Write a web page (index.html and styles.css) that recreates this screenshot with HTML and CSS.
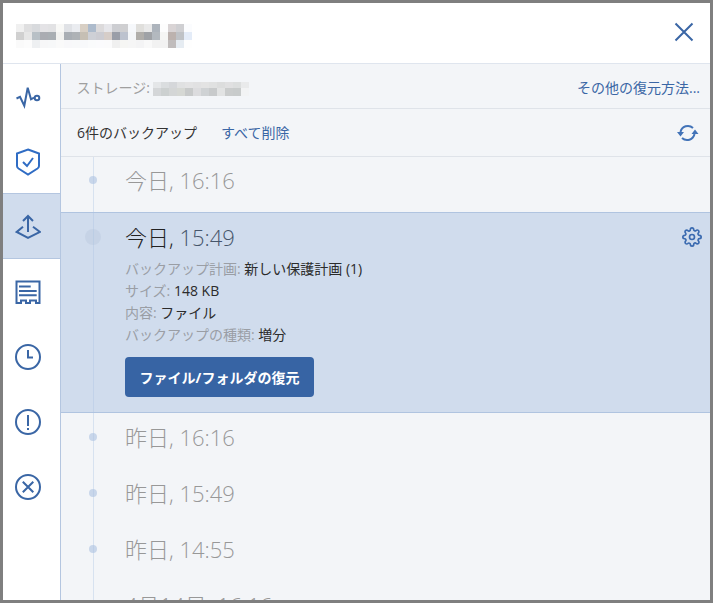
FILE: index.html
```html
<!DOCTYPE html>
<html lang="ja">
<head>
<meta charset="utf-8">
<title>バックアップ</title>
<link rel="stylesheet" href="styles.css">
</head>
<body>
<div class="window">
  <header class="top">
    <svg class="mosaic" width="176" height="24" viewBox="0 0 176 24" shape-rendering="crispEdges">
      <g>
        <rect x="0" y="0" width="8" height="8" fill="#f0f0f0"/><rect x="8" y="0" width="8" height="8" fill="#dfdfe0"/><rect x="16" y="0" width="8" height="8" fill="#d8dadd"/><rect x="24" y="0" width="8" height="8" fill="#e4e3e6"/><rect x="32" y="0" width="8" height="8" fill="#e2e2e4"/><rect x="40" y="0" width="8" height="8" fill="#f8f8f6"/><rect x="48" y="0" width="8" height="8" fill="#e0e2e6"/><rect x="56" y="0" width="8" height="8" fill="#eaecf0"/><rect x="64" y="0" width="8" height="8" fill="#d8cfc4"/><rect x="72" y="0" width="8" height="8" fill="#adbbcc"/><rect x="80" y="0" width="8" height="8" fill="#dcdadb"/><rect x="88" y="0" width="8" height="8" fill="#e6e6ea"/><rect x="96" y="0" width="8" height="8" fill="#cdced2"/><rect x="104" y="0" width="8" height="8" fill="#cfcfd1"/><rect x="112" y="0" width="8" height="8" fill="#f6f8fb"/><rect x="120" y="0" width="8" height="8" fill="#e0dfdc"/><rect x="128" y="0" width="8" height="8" fill="#e9e9e9"/><rect x="136" y="0" width="8" height="8" fill="#adb4bc"/><rect x="144" y="0" width="8" height="8" fill="#fdfdfd"/><rect x="152" y="0" width="8" height="8" fill="#d9d4d5"/><rect x="160" y="0" width="8" height="8" fill="#cfcfd2"/><rect x="168" y="0" width="8" height="8" fill="#fbfcfe"/>
      </g>
      <g>
        <rect x="0" y="8" width="8" height="8" fill="#d0d0d0"/><rect x="8" y="8" width="8" height="8" fill="#e6e6e6"/><rect x="16" y="8" width="8" height="8" fill="#b8c0c6"/><rect x="24" y="8" width="8" height="8" fill="#aaacb2"/><rect x="32" y="8" width="8" height="8" fill="#a9aeb3"/><rect x="40" y="8" width="8" height="8" fill="#f2f2f0"/><rect x="48" y="8" width="8" height="8" fill="#a9aeb4"/><rect x="56" y="8" width="8" height="8" fill="#aeb2b6"/><rect x="64" y="8" width="8" height="8" fill="#c6bfb4"/><rect x="72" y="8" width="8" height="8" fill="#ced0d6"/><rect x="80" y="8" width="8" height="8" fill="#ccccd2"/><rect x="88" y="8" width="8" height="8" fill="#d6cdc8"/><rect x="96" y="8" width="8" height="8" fill="#9a9ea8"/><rect x="104" y="8" width="8" height="8" fill="#bcc2ce"/><rect x="112" y="8" width="8" height="8" fill="#f4f6f8"/><rect x="120" y="8" width="8" height="8" fill="#b0aeaa"/><rect x="128" y="8" width="8" height="8" fill="#9fa2a6"/><rect x="136" y="8" width="8" height="8" fill="#b3b9bf"/><rect x="144" y="8" width="8" height="8" fill="#f6f6f4"/><rect x="152" y="8" width="8" height="8" fill="#bcb2ae"/><rect x="160" y="8" width="8" height="8" fill="#bfc2c6"/><rect x="168" y="8" width="8" height="8" fill="#e4ecf8"/>
      </g>
      <g>
        <rect x="0" y="16" width="8" height="8" fill="#fafafa"/><rect x="8" y="16" width="8" height="8" fill="#fcfcfc"/><rect x="16" y="16" width="8" height="8" fill="#eef0f2"/><rect x="24" y="16" width="8" height="8" fill="#f7f7f8"/><rect x="32" y="16" width="8" height="8" fill="#f7f8f9"/><rect x="40" y="16" width="8" height="8" fill="#fafafa"/><rect x="48" y="16" width="8" height="8" fill="#f8f8fa"/><rect x="56" y="16" width="8" height="8" fill="#f8f9fa"/><rect x="64" y="16" width="8" height="8" fill="#f8f9fb"/><rect x="72" y="16" width="8" height="8" fill="#fafbfc"/><rect x="80" y="16" width="8" height="8" fill="#fbfbfd"/><rect x="88" y="16" width="8" height="8" fill="#fbfbfc"/><rect x="96" y="16" width="8" height="8" fill="#f0f0f0"/><rect x="104" y="16" width="8" height="8" fill="#f6f6f4"/><rect x="112" y="16" width="8" height="8" fill="#f6f6f6"/><rect x="120" y="16" width="8" height="8" fill="#f4f4f5"/><rect x="128" y="16" width="8" height="8" fill="#f9f9f9"/><rect x="136" y="16" width="8" height="8" fill="#f2f2f2"/><rect x="144" y="16" width="8" height="8" fill="#f2f2f2"/><rect x="152" y="16" width="8" height="8" fill="#c0bcbc"/><rect x="160" y="16" width="8" height="8" fill="#e6ecf2"/><rect x="168" y="16" width="8" height="8" fill="#fefefe"/>
      </g>
    </svg>
    <svg class="close" width="24" height="24" viewBox="0 0 24 24" fill="none" stroke="currentColor" stroke-width="2"><path d="M3.500 3.500l17 17M20.500 3.500l-17 17"/></svg>
  </header>
  <div class="body">
    <nav class="side">
      <div class="nav-item">
        <svg width="26" height="26" viewBox="0 0 26 26" fill="none" stroke="currentColor" stroke-width="2"><path d="M1.500 14.500L5 12.800l4.300 9L12.700 3.800 16 15.300l3-1.600"/><circle cx="22" cy="14" r="2.300"/></svg>
      </div>
      <div class="nav-item shield">
        <svg width="26" height="28" viewBox="0 0 26 28" fill="none" stroke="currentColor" stroke-width="2"><path d="M13 1.500L24 5.500V18q0 1.500-1.500 2.500L13 26.500 3.500 20.500Q2 19.500 2 18V5.500z"/><path d="M8 14l4 4 6-8"/></svg>
      </div>
      <div class="nav-item active">
        <svg width="26" height="26" viewBox="0 0 26 26" fill="none" stroke="currentColor" stroke-width="2"><path d="M8 12.700L1.700 18 13 24l12-6-7-5.300"/><path d="M13 18V1.500M8 7l5-5 5 5"/></svg>
      </div>
      <div class="nav-item">
        <svg width="26" height="26" viewBox="0 0 26 26" fill="none" stroke="currentColor" stroke-width="2"><path d="M1.500 24V2.500h23V24h-3.500v-2.500h-6V24h-4v-2.500h-5V24z"/><path d="M4 7.500h11.700M4 12h17.700M4 16.300h17.700"/></svg>
      </div>
      <div class="nav-item">
        <svg width="26" height="26" viewBox="0 0 26 26" fill="none" stroke="currentColor" stroke-width="2"><circle cx="13" cy="13" r="12"/><path d="M13 6v7.500h5"/></svg>
      </div>
      <div class="nav-item">
        <svg width="26" height="26" viewBox="0 0 26 26" fill="none" stroke="currentColor" stroke-width="2"><circle cx="13" cy="13" r="12"/><path d="M13 6v11M13 19v2"/></svg>
      </div>
      <div class="nav-item">
        <svg width="26" height="26" viewBox="0 0 26 26" fill="none" stroke="currentColor" stroke-width="2"><circle cx="13" cy="13" r="12"/><path d="M7.800 7.800l10.500 10.500M18.300 7.800L7.800 18.300"/></svg>
      </div>
    </nav>
    <main class="main">
      <div class="bar storage">
        <span class="muted">ストレージ:</span>
        <svg class="mosaic-small" width="96" height="16" viewBox="0 0 96 16" shape-rendering="crispEdges">
          <rect x="0" y="2" width="8" height="6" fill="#e4e6e8"/><rect x="8" y="2" width="8" height="6" fill="#dadddf"/><rect x="16" y="2" width="8" height="6" fill="#d5d7da"/><rect x="24" y="2" width="8" height="6" fill="#e0e1e2"/><rect x="32" y="2" width="8" height="6" fill="#e3e3e4"/><rect x="40" y="2" width="8" height="6" fill="#e1e1e2"/><rect x="48" y="2" width="8" height="6" fill="#e3e3e3"/><rect x="56" y="2" width="8" height="6" fill="#e0e1e1"/><rect x="64" y="2" width="8" height="6" fill="#dcdddd"/><rect x="72" y="2" width="8" height="6" fill="#e0e0e1"/><rect x="80" y="2" width="8" height="6" fill="#dcdede"/><rect x="88" y="2" width="8" height="6" fill="#e9eaeb"/>
          <rect x="0" y="8" width="8" height="8" fill="#d4d6d8"/><rect x="8" y="8" width="8" height="8" fill="#ccd0d0"/><rect x="16" y="8" width="8" height="8" fill="#d4d6d6"/><rect x="24" y="8" width="8" height="8" fill="#d6d8d4"/><rect x="32" y="8" width="8" height="8" fill="#c8caca"/><rect x="40" y="8" width="8" height="8" fill="#dcdcde"/><rect x="48" y="8" width="8" height="8" fill="#cfd2d4"/><rect x="56" y="8" width="8" height="8" fill="#c8cacb"/><rect x="64" y="8" width="8" height="8" fill="#e2e3e3"/><rect x="72" y="8" width="8" height="8" fill="#cacccc"/><rect x="80" y="8" width="8" height="8" fill="#c8cbcb"/><rect x="88" y="8" width="8" height="8" fill="#f2f3f4"/>
        </svg>
        <a class="link push">その他の復元方法...</a>
      </div>
      <div class="bar count">
        <span class="dark">6件のバックアップ</span>
        <a class="link delete">すべて削除</a>
        <svg class="refresh push" width="24" height="20" viewBox="0 0 24 20" fill="none" stroke="currentColor" stroke-width="2"><path d="M5.500 9A7.500 7.500 0 0 1 18 5M19.500 11A7.500 7.500 0 0 1 7 15"/><path class="head" d="M2 9h7L5.500 13.500zM16.500 11h7L20 6.500z"/></svg>
      </div>
      <div class="list">
        <div class="row"><div class="marker"><span class="dot"></span></div><div class="date">今日, 16:16</div></div>
        <section class="row selected">
          <div class="marker"><span class="dot big"></span></div>
          <div class="detail">
            <div class="date"><span class="day">今日,</span> <span class="time">15:49</span></div>
            <dl class="facts">
              <div><dt>バックアップ計画:</dt> <dd>新しい保護計画 (1)</dd></div>
              <div><dt>サイズ:</dt> <dd>148 KB</dd></div>
              <div><dt>内容:</dt> <dd>ファイル</dd></div>
              <div><dt>バックアップの種類:</dt> <dd>増分</dd></div>
            </dl>
            <button class="restore">ファイル/フォルダの復元</button>
          </div>
          <svg class="gear" width="20" height="20" viewBox="0 0 24 24" fill="none" stroke="currentColor" stroke-width="2"><circle cx="12" cy="12" r="3"/><path d="M19.400 15a1.650 1.650 0 0 0 .33 1.820l.06.06a2 2 0 0 1 0 2.830 2 2 0 0 1-2.830 0l-.06-.06a1.650 1.650 0 0 0-1.820-.33 1.650 1.650 0 0 0-1 1.510V21a2 2 0 0 1-2 2 2 2 0 0 1-2-2v-.09A1.650 1.650 0 0 0 9 19.400a1.650 1.650 0 0 0-1.820.33l-.06.06a2 2 0 0 1-2.830 0 2 2 0 0 1 0-2.830l.06-.06a1.650 1.650 0 0 0 .33-1.820 1.650 1.650 0 0 0-1.510-1H3a2 2 0 0 1-2-2 2 2 0 0 1 2-2h.09A1.650 1.650 0 0 0 4.600 9a1.650 1.650 0 0 0-.33-1.820l-.06-.06a2 2 0 0 1 0-2.830 2 2 0 0 1 2.830 0l.06.06a1.650 1.650 0 0 0 1.820.33H9a1.650 1.650 0 0 0 1-1.510V3a2 2 0 0 1 2-2 2 2 0 0 1 2 2v.09a1.650 1.650 0 0 0 1 1.510 1.650 1.650 0 0 0 1.820-.33l.06-.06a2 2 0 0 1 2.830 0 2 2 0 0 1 0 2.830l-.06.06a1.650 1.650 0 0 0-.33 1.820V9a1.650 1.650 0 0 0 1.510 1H21a2 2 0 0 1 2 2 2 2 0 0 1-2 2h-.09a1.650 1.650 0 0 0-1.510 1z"/></svg>
        </section>
        <div class="row"><div class="marker"><span class="dot"></span></div><div class="date">昨日, 16:16</div></div>
        <div class="row"><div class="marker"><span class="dot"></span></div><div class="date">昨日, 15:49</div></div>
        <div class="row"><div class="marker"><span class="dot"></span></div><div class="date">昨日, 14:55</div></div>
        <div class="row"><div class="marker"><span class="dot"></span></div><div class="date">4月14日, 16:16</div></div>
        <div class="timeline"></div>
      </div>
    </main>
  </div>
</div>
</body>
</html>
```
FILE: styles.css
```css
* { box-sizing: border-box; }
html, body { margin: 0; height: 100%; overflow: hidden; }
body {
  font-family: "Open Sans", "Noto Sans CJK JP", sans-serif;
  font-size: 14px;
  color: #333;
  background: #fff;
}
.window {
  height: 603px;
  border: 3px solid #7f7f7f;
  display: flex;
  flex-direction: column;
  overflow: hidden;
}
.top {
  flex: none;
  height: 61px;
  display: flex;
  justify-content: space-between;
  align-items: flex-start;
  padding: 21px 14px 0 13px;
  border-bottom: 1px solid #dfe5ee;
  color: #3a66a5;
}
.mosaic, .mosaic-small, .close { display: block; flex: none; }
.close { margin-top: -4px; }
.body { flex: 1; min-height: 0; display: flex; }
.side {
  flex: none;
  width: 58px;
  border-right: 1px solid #b4c6e0;
  color: #3a66a5;
}
.nav-item {
  height: 65px;
  display: flex;
  align-items: center;
  padding-left: 12px;
}
.nav-item svg { display: block; }
.shield { color: #2f6cc4; }
.active {
  background: #d0dced;
  box-shadow: 0 -1px 0 #b4c6e0, inset 0 -1px 0 #b4c6e0;
}
.main {
  flex: 1;
  min-width: 0;
  background: #f3f5f8;
  display: flex;
  flex-direction: column;
}
.bar {
  flex: none;
  display: flex;
  align-items: center;
  padding: 0 11px 0 16px;
  border-bottom: 1px solid #dfe3e9;
  line-height: 20px;
}
.storage { height: 45px; padding-top: 3px; padding-left: 15.500px; padding-right: 10px; }
.count { height: 48px; }
.muted { color: #9f9f9f; }
.dark { color: #333; }
.link { color: #3a66a5; }
.push { margin-left: auto; }
.mosaic-small { margin-left: 3px; }
.delete { margin-left: 24px; }
.refresh { color: #4273b8; }
.head { fill: currentColor; stroke: none; }
.list {
  flex: 1;
  min-height: 0;
  position: relative;
  margin-top: -1px;
}
.timeline {
  position: absolute;
  top: 1px;
  bottom: 0;
  left: 32px;
  width: 1px;
  background: rgba(170, 195, 225, .38);
}
.row {
  display: flex;
  height: 56px;
  align-items: flex-start;
}
.marker {
  flex: none;
  width: 64px;
  height: 48px;
  display: flex;
  align-items: center;
  justify-content: center;
}
.dot {
  width: 8px;
  height: 8px;
  border-radius: 50%;
  background: #c8d6ea;
}
.date {
  font-size: 22px;
  font-weight: 300;
  line-height: 48px;
  color: #989898;
  white-space: nowrap;
}
.selected {
  height: 201px;
  background: #d0dced;
  border-top: 1px solid #b0c4e0;
  border-bottom: 1px solid #b0c4e0;
}
.dot.big {
  width: 16px;
  height: 16px;
  background: #c6d3e6;
}
.detail { flex: 1; }
.selected .date { color: #222; }
.time { color: #46566b; }
.facts {
  margin: -3px 0 0;
  line-height: 22px;
}
.facts div { white-space: nowrap; }
.facts dt, .facts dd { display: inline; margin: 0; }
.facts dt { color: #9a9ea5; }
.facts dd { color: #2b2b2b; }
.restore {
  display: block;
  margin-top: 11px;
  height: 40px;
  width: 189px;
  padding: 0;
  border: 0;
  border-radius: 4px;
  background: #3764a4;
  color: #fff;
  font: 700 14px "Open Sans", "Noto Sans CJK JP", sans-serif;
}
.gear {
  flex: none;
  margin: 14px 8px 0 0;
  color: #3a6ab0;
}
```
